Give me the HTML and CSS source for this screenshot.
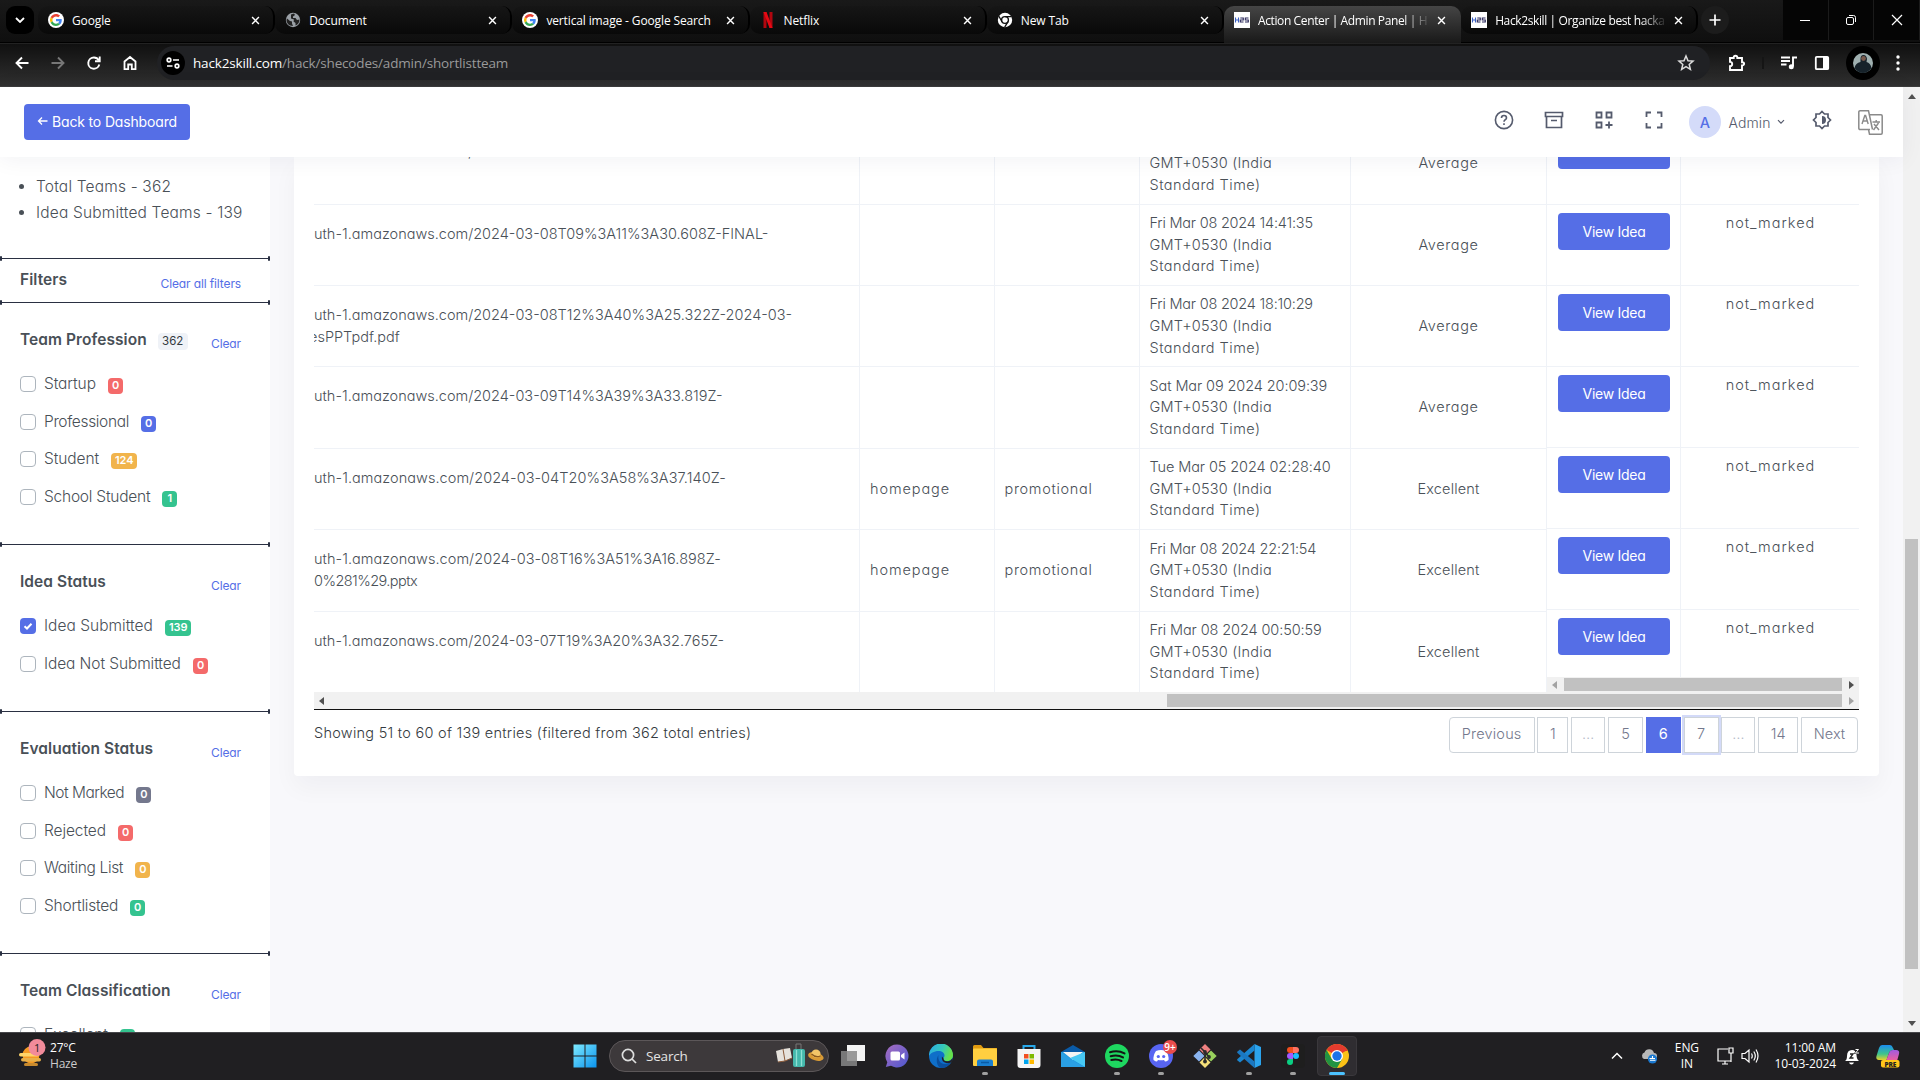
FILE: index.html
```html
<!DOCTYPE html>
<html lang="en">
<head>
<meta charset="utf-8">
<title>Action Center | Admin Panel | Hack2skill</title>
<link rel="stylesheet" href="styles.css">
</head>
<body>
<svg class="defs" width="0" height="0">
  <defs>
    <symbol id="x" viewBox="0 0 10 10"><path d="M1.2 1.2l7.6 7.6M8.8 1.2L1.2 8.8" stroke="#fff" stroke-width="1.6"/></symbol>
    <symbol id="google" viewBox="0 0 48 48"><circle cx="24" cy="24" r="24" fill="#fff"/><g transform="translate(6 6) scale(.75)"><path fill="#EA4335" d="M24 9.5c3.5 0 6.700 1.200 9.200 3.600l6.900-6.900C35.900 2.400 30.500 0 24 0 14.600 0 6.500 5.400 2.600 13.200l8 6.200C12.400 13.700 17.700 9.500 24 9.500z"/><path fill="#4285F4" d="M47 24.500c0-1.600-.2-3.100-.4-4.500H24v9h12.900c-.6 3-2.300 5.500-4.800 7.200l7.700 6C44.400 38 47 31.800 47 24.500z"/><path fill="#FBBC05" d="M10.500 28.600a14.500 14.500 0 010-9.200l-8-6.200a24 24 0 000 21.600z"/><path fill="#34A853" d="M24 48c6.500 0 11.900-2.100 15.900-5.800l-7.700-6c-2.200 1.500-4.900 2.300-8.200 2.300-6.300 0-11.600-4.200-13.500-9.900l-8 6.200C6.500 42.600 14.600 48 24 48z"/></g></symbol>
    <symbol id="h2s" viewBox="0 0 16 16"><rect width="16" height="16" fill="#fff"/><path d="M1.500 5.500v5M4.500 5.500v5M1.500 8h3" stroke="#3d62c4" stroke-width="1.100"/><path d="M6.300 6h3v2h-3v2h3.200M14.500 6h-3.200v2h3v2h-3.300" stroke="#2c2a5c" stroke-width="1.100" fill="none"/></symbol>
    <symbol id="tick" viewBox="0 0 16 16"><path d="M4.500 8.200l2.500 2.300 4.500-4.700" fill="none" stroke="#fff" stroke-width="2"/></symbol>
  </defs>
</svg>

<div class="tabstrip">
  <div class="tab-menu"><svg width="10" height="6" viewBox="0 0 10 6"><path d="M1 1l4 4 4-4" fill="none" stroke="#fff" stroke-width="1.800"/></svg></div>
  <div class="tab"><svg class="fav"><use href="#google"/></svg><span class="tab-title">Google</span><svg class="close"><use href="#x"/></svg></div>
  <div class="tab"><svg class="fav" viewBox="0 0 16 16"><circle cx="8" cy="8" r="7.200" fill="#9aa0a6"/><path d="M2 6.500l3 2.500 2 .500v2l1 2.500c-4 0-6.500-3-6.500-6zM6 2.500l3-1 1 1.500-2 1.500v1.500h2.500l1.500 2 2.500-.5c0 3-2 5.500-4 6v-2.500l-2-1.500.5-2-3-1z" fill="#222"/></svg><span class="tab-title">Document</span><svg class="close"><use href="#x"/></svg></div>
  <div class="tab"><svg class="fav"><use href="#google"/></svg><span class="tab-title">vertical image - Google Search</span><svg class="close"><use href="#x"/></svg></div>
  <div class="tab"><svg class="fav" viewBox="0 0 16 16"><path d="M3.500 0h3v16h-3zM9.500 0h3v16h-3z" fill="#b1060f"/><path d="M3.500 0h3l6 16h-3z" fill="#e50914"/></svg><span class="tab-title">Netflix</span><svg class="close"><use href="#x"/></svg></div>
  <div class="tab"><svg class="fav" viewBox="0 0 16 16"><circle cx="8" cy="8" r="7.200" fill="#fff"/><circle cx="8" cy="8" r="3.400" fill="#fff" stroke="#111" stroke-width="1.400"/><path d="M8 4.600h6.500M5 9.700L1.900 4.200M11 9.700l-3.300 5.500" stroke="#111" stroke-width="1.300"/></svg><span class="tab-title">New Tab</span><svg class="close"><use href="#x"/></svg></div>
  <div class="tab active"><svg class="fav"><use href="#h2s"/></svg><span class="tab-title fade">Action Center | Admin Panel | H</span><svg class="close"><use href="#x"/></svg></div>
  <div class="tab last"><svg class="fav"><use href="#h2s"/></svg><span class="tab-title fade">Hack2skill | Organize best hacka</span><svg class="close"><use href="#x"/></svg></div>
  <div class="new-tab"><svg width="12" height="12" viewBox="0 0 12 12"><path d="M6 .5v11M.5 6h11" stroke="#fff" stroke-width="1.700"/></svg></div>
  <div class="win-controls">
    <div><svg width="12" height="12"><path d="M1 6.500h10" stroke="#fff"/></svg></div>
    <div><svg width="12" height="12" fill="none" stroke="#fff"><rect x="1.500" y="3.500" width="7" height="7" rx="1.500"/><path d="M4 1.500h4.500a2 2 0 012 2V8"/></svg></div>
    <div><svg width="12" height="12"><path d="M1 1l10 10M11 1L1 11" stroke="#fff" stroke-width="1.200"/></svg></div>
  </div>
</div>

<div class="toolbar">
  <div class="nav">
    <svg width="16" height="16" viewBox="0 0 16 16" fill="none" stroke="#fff" stroke-width="1.900"><path d="M14.500 8H2.500M8 2.500L2.500 8 8 13.500"/></svg>
    <svg width="16" height="16" viewBox="0 0 16 16" fill="none" stroke="#777" stroke-width="1.900"><path d="M1.500 8h12M8 2.500L13.500 8 8 13.500"/></svg>
    <svg width="16" height="16" viewBox="0 0 16 16" fill="none" stroke="#fff" stroke-width="1.900"><path d="M13.300 9.500A5.600 5.600 0 118 2.500c2.200 0 3.800 1 5 3"/><path d="M13.700 1.500v4.700H9" /></svg>
    <svg width="16" height="16" viewBox="0 0 16 16" fill="none" stroke="#fff" stroke-width="1.800"><path d="M2.500 6.500L8 2l5.500 4.500v7.600h-3.700V9.500H6.200v4.600H2.500z"/></svg>
  </div>
  <div class="omnibox">
    <div class="site"><svg width="14" height="12" viewBox="0 0 14 12" fill="none" stroke="#fff" stroke-width="1.700"><circle cx="3" cy="3" r="1.800"/><path d="M7 3h6M1 9h5.500"/><circle cx="11" cy="9" r="1.800"/></svg></div>
    <span class="url"><b>hack2skill.com</b>/hack/shecodes/admin/shortlistteam</span>
    <svg class="star" width="18" height="18" viewBox="0 0 18 18"><path d="M9 2l2 4.700 5 .4-3.800 3.300 1.200 5L9 12.700l-4.400 2.700 1.200-5L2 7.100l5-.4z" fill="none" stroke="#ddd" stroke-width="1.500"/></svg>
  </div>
  <div class="tools">
    <svg width="20" height="20" viewBox="0 0 20 20" fill="none" stroke="#fff" stroke-width="1.900"><path d="M4 5h3.700V4.500a1.800 1.800 0 013.600 0V5H16v4.200h.5a1.600 1.600 0 010 3.200H16V17H4v-3.700a2.200 2.200 0 000-4.400z"/></svg>
    <i class="tool-sep"></i>
    <svg width="18" height="16" viewBox="0 0 18 16"><path d="M1 2.500h9M1 6h9M1 9.500h5.500M13 11.500V2.500h4" stroke="#fff" stroke-width="1.900" fill="none"/><circle cx="11.300" cy="11.800" r="2.500" fill="#fff"/></svg>
    <svg width="16" height="16" viewBox="0 0 16 16"><rect x="1.800" y="1.800" width="12.400" height="12.400" rx="1" fill="none" stroke="#fff" stroke-width="1.800"/><path d="M9 2h5v12H9z" fill="#fff"/></svg>
    <svg width="34" height="34" viewBox="0 0 34 34"><circle cx="17" cy="17" r="17" fill="#000"/><circle cx="17" cy="17" r="10" fill="#9fb0b0"/><path d="M8.500 22q1-5 6-6v-3q0-4 3-4t3.500 4l-.5 3q4 1 5 6-3.500 5-8.500 5t-8.500-5z" fill="#16222a"/><circle cx="17.500" cy="12.500" r="2.400" fill="#7a5a4c"/></svg>
    <svg width="4" height="16" viewBox="0 0 4 16" fill="#fff"><circle cx="2" cy="2" r="1.700"/><circle cx="2" cy="8" r="1.700"/><circle cx="2" cy="14" r="1.700"/></svg>
  </div>
</div>

<div class="page">
  <div class="app">
    <header class="topbar">
      <a class="btn back"><svg width="11" height="10" viewBox="0 0 11 10"><path d="M10.500 5H1.500M5 1.500L1.500 5 5 8.500" fill="none" stroke="#fff" stroke-width="1.300"/></svg><span>Back to Dashboard</span></a>
      <div class="top-icons">
        <svg width="20" height="20" viewBox="0 0 20 20" fill="none" stroke="#555b6d" stroke-width="1.600"><circle cx="10" cy="10" r="8.600"/><path d="M7.500 8a2.500 2.500 0 115 0c0 1.700-2.500 1.800-2.500 3.800M10 13.300v1.700"/></svg>
        <svg width="20" height="20" viewBox="0 0 20 20" fill="none" stroke="#555b6d" stroke-width="1.700"><path d="M1.500 2.500h17v4h-17zM2.500 6.500v11h15v-11M7 10.500h6"/></svg>
        <svg width="20" height="20" viewBox="0 0 20 20" fill="none" stroke="#555b6d" stroke-width="1.800"><path d="M2.500 2.500h5v5h-5zM12.500 2.500h5v5h-5zM2.500 12.500h5v5h-5zM15 11.500v7M11.500 15h7"/></svg>
        <svg width="20" height="20" viewBox="0 0 20 20" fill="none" stroke="#555b6d" stroke-width="1.800"><path d="M2.500 7V2.500H7M13 2.500h4.500V7M17.500 13v4.500H13M7 17.500H2.500V13"/></svg>
      </div>
      <div class="user"><span class="avatar">A</span><span class="user-name">Admin</span><svg width="8" height="6" viewBox="0 0 8 6"><path d="M1 1.200l3 3 3-3" fill="none" stroke="#555b6d" stroke-width="1.200"/></svg></div>
      <svg class="theme" width="20" height="20" viewBox="0 0 20 20"><path d="M10 1.500l2.500 2.500H16v3.500l2.500 2.500-2.500 2.500V16h-3.500L10 18.500 7.500 16H4v-3.500L1.500 10 4 7.500V4h3.500z" fill="none" stroke="#555b6d" stroke-width="1.700"/><path d="M10 6a4 4 0 010 8z" fill="#555b6d"/></svg>
      <svg class="lang" width="25" height="25" viewBox="0 0 25 25" fill="none" stroke="#8a8a8a" stroke-width="1.500"><path d="M12 19.500H2A1.200 1.200 0 01.8 18.300V2A1.200 1.200 0 012 .8h8.500l4 18.700M11.500 4.800H23A1.200 1.200 0 0124.200 6v17a1.200 1.200 0 01-1.200 1.200H11.500l-1-4.700"/><path d="M4 14l2.800-8.500h.8L10.200 14M5 11h4.200M14.500 12h7.500M18.200 10v2M15.500 20l5-7M16 14l5 6" stroke-width="1.400"/></svg>
    </header>

    <div class="body">
      <aside class="sidebar">
        <section class="stats"><ul><li>Total Teams - 362</li><li>Idea Submitted Teams - 139</li></ul></section>
        <section class="filters-head"><h3>Filters</h3><a>Clear all filters</a></section>
        <section class="group">
          <div class="head"><h3>Team Profession</h3><em>362</em><a>Clear</a></div>
          <label><i></i><span>Startup</span><b class="red">0</b></label>
          <label><i></i><span class="tight">Professional</span><b class="blue">0</b></label>
          <label><i></i><span>Student</span><b class="amber">124</b></label>
          <label><i></i><span class="snug">School Student</span><b class="green">1</b></label>
        </section>
        <section class="group">
          <div class="head"><h3>Idea Status</h3><a>Clear</a></div>
          <label><i class="on"><svg width="16" height="16"><use href="#tick"/></svg></i><span class="even">Idea Submitted</span><b class="green">139</b></label>
          <label><i></i><span>Idea Not Submitted</span><b class="red">0</b></label>
        </section>
        <section class="group">
          <div class="head"><h3>Evaluation Status</h3><a>Clear</a></div>
          <label><i></i><span class="tighter">Not Marked</span><b class="gray">0</b></label>
          <label><i></i><span>Rejected</span><b class="red">0</b></label>
          <label><i></i><span class="tight">Waiting List</span><b class="amber">0</b></label>
          <label><i></i><span class="snug">Shortlisted</span><b class="green">0</b></label>
        </section>
        <section class="group">
          <div class="head"><h3>Team Classification</h3><a>Clear</a></div>
          <label><i></i><span>Excellent</span><b class="green">0</b></label>
        </section>
      </aside>

      <main class="main">
        <div class="card">
          <div class="tables">
            <div class="scroll-table">
              <div class="row"><div class="link"><p>uth-1.amazonaws.com/2024-03-07T17%3A09%3A47.214Z-</p></div><div></div><div></div><div class="date"><p>Fri Mar 08 2024 13:02:11</p><p>GMT+0530 (India</p><p class="tz">Standard Time)</p></div><div class="mid avg">Average</div></div>
              <div class="row"><div class="link"><p>uth-1.amazonaws.com/2024-03-08T09%3A11%3A30.608Z-FINAL-</p></div><div></div><div></div><div class="date"><p>Fri Mar 08 2024 14:41:35</p><p>GMT+0530 (India</p><p class="tz">Standard Time)</p></div><div class="mid avg">Average</div></div>
              <div class="row"><div class="link"><p>uth-1.amazonaws.com/2024-03-08T12%3A40%3A25.322Z-2024-03-</p><p class="cut">esPPTpdf.pdf</p></div><div></div><div></div><div class="date"><p>Fri Mar 08 2024 18:10:29</p><p>GMT+0530 (India</p><p class="tz">Standard Time)</p></div><div class="mid avg">Average</div></div>
              <div class="row"><div class="link"><p>uth-1.amazonaws.com/2024-03-09T14%3A39%3A33.819Z-</p></div><div></div><div></div><div class="date"><p class="wide">Sat Mar 09 2024 20:09:39</p><p>GMT+0530 (India</p><p class="tz">Standard Time)</p></div><div class="mid avg">Average</div></div>
              <div class="row"><div class="link"><p class="long">uth-1.amazonaws.com/2024-03-04T20%3A58%3A37.140Z-</p></div><div class="home">homepage</div><div class="promo">promotional</div><div class="date"><p class="wide">Tue Mar 05 2024 02:28:40</p><p>GMT+0530 (India</p><p class="tz">Standard Time)</p></div><div class="mid">Excellent</div></div>
              <div class="row"><div class="link"><p class="long">uth-1.amazonaws.com/2024-03-08T16%3A51%3A16.898Z-</p><p class="file">0%281%29.pptx</p></div><div class="home">homepage</div><div class="promo">promotional</div><div class="date"><p>Fri Mar 08 2024 22:21:54</p><p>GMT+0530 (India</p><p class="tz">Standard Time)</p></div><div class="mid">Excellent</div></div>
              <div class="row"><div class="link"><p>uth-1.amazonaws.com/2024-03-07T19%3A20%3A32.765Z-</p></div><div></div><div></div><div class="date"><p class="wide">Fri Mar 08 2024 00:50:59</p><p>GMT+0530 (India</p><p class="tz">Standard Time)</p></div><div class="mid">Excellent</div></div>
            </div>
            <div class="fixed-table">
              <div class="frow"><div><a class="btn">View Idea</a></div><div>not_marked</div></div>
              <div class="frow"><div><a class="btn">View Idea</a></div><div>not_marked</div></div>
              <div class="frow"><div><a class="btn">View Idea</a></div><div>not_marked</div></div>
              <div class="frow"><div><a class="btn">View Idea</a></div><div>not_marked</div></div>
              <div class="frow"><div><a class="btn">View Idea</a></div><div>not_marked</div></div>
              <div class="frow"><div><a class="btn">View Idea</a></div><div>not_marked</div></div>
              <div class="frow short"><div><a class="btn">View Idea</a></div><div>not_marked</div></div>
              <div class="hbar"><i class="la dim"></i><i class="thumb"></i><i class="ra"></i></div>
            </div>
          </div>
          <div class="hbar wide-bar"><i class="la"></i><i class="thumb"></i><i class="ra dim"></i></div>
          <div class="table-foot">
            <span class="info">Showing 51 to 60 of 139 entries (filtered from 362 total entries)</span>
            <nav class="pages"><a class="w-prev">Previous</a><a class="w-one">1</a><a class="w-dots">…</a><a class="w-num">5</a><a class="w-num current">6</a><a class="w-num focus">7</a><a class="w-dots">…</a><a class="w-two">14</a><a class="w-next">Next</a></nav>
          </div>
        </div>
      </main>
    </div>
  </div>
  <div class="vbar"><i class="ua"></i><i class="vthumb"></i><i class="da"></i></div>
</div>

<footer class="taskbar">
  <div class="weather">
    <svg width="28" height="32" viewBox="0 0 28 32"><circle cx="13" cy="17" r="8.500" fill="#f59a23"/><rect x="1" y="15" width="20" height="3.500" rx="1.700" fill="#ffd56b"/><rect x="3" y="20" width="20" height="3.500" rx="1.700" fill="#e8b04a"/><rect x="6" y="25" width="14" height="3" rx="1.500" fill="#c98b2e"/><circle cx="19" cy="9.500" r="8.500" fill="#f28b9a"/><text x="19" y="13.500" class="wnum">1</text></svg>
    <div>27°C<br><span>Haze</span></div>
  </div>
  <div class="dock">
    <svg class="start" width="24" height="24" viewBox="0 0 24 24"><defs><linearGradient id="w" x1="0" y1="0" x2="1" y2="1"><stop offset="0" stop-color="#7eeaff"/><stop offset="1" stop-color="#0a93ee"/></linearGradient></defs><path fill="url(#w)" d="M.5.5h11v11H.5zM12.500.5h11v11h-11zM.5 12.500h11v11H.5zM12.500 12.500h11v11h-11z"/></svg>
    <div class="search">
      <svg width="16" height="16" viewBox="0 0 16 16" fill="none" stroke="#ddd" stroke-width="1.700"><circle cx="7" cy="7" r="5.600"/><path d="M11 11l4 4"/></svg>
      <span>Search</span>
      <svg width="50" height="26" viewBox="0 0 50 26"><path d="M1 8l7-2 7-1 2 10-7 3-7 1z" fill="#e6e2dc"/><path d="M8 6l2 12M3 19l7-1 7-3" stroke="#8a5a3a" fill="none"/><path d="M21 6V1h5v5" fill="none" stroke="#777"/><rect x="18" y="6" width="12" height="18" rx="2" fill="#45b8ac"/><path d="M21.500 7v16M26.500 7v16" stroke="#8fe0d5" stroke-width="1.300"/><ellipse cx="41" cy="13.500" rx="8" ry="4" transform="rotate(15 41 13)" fill="#d99b35"/><ellipse cx="41" cy="10.500" rx="4.500" ry="4" fill="#f3c668"/><path d="M36.500 11q4 4 9 2" stroke="#8a5a20" fill="none" stroke-width="1.300"/></svg>
    </div>
    <div class="ico"><svg width="24" height="24" viewBox="0 0 24 24"><rect x="6" y="1" width="18" height="16" fill="#f4f4f4"/><rect x="0" y="7" width="16" height="15" fill="#888" opacity=".85"/></svg></div>
    <div class="ico"><svg width="24" height="24" viewBox="0 0 24 24"><defs><linearGradient id="t" x1="0" y1="0" x2="1" y2="1"><stop offset="0" stop-color="#a86cc0"/><stop offset="1" stop-color="#4c58d0"/></linearGradient></defs><path d="M12 .5a11.500 11.500 0 11-6 21.300L.8 23l1.500-4.800A11.500 11.500 0 0112 .5z" fill="url(#t)"/><rect x="5.500" y="7.500" width="9.500" height="9" rx="1.500" fill="#fff"/><path d="M16 11l3.500-2.500v7L16 13z" fill="#fff"/></svg></div>
    <div class="ico"><svg width="24" height="24" viewBox="0 0 24 24"><defs><linearGradient id="e" x1="0" y1="0" x2="1" y2=".3"><stop offset="0" stop-color="#2aa8e8"/><stop offset=".6" stop-color="#36c8b8"/><stop offset="1" stop-color="#66e04a"/></linearGradient></defs><circle cx="12" cy="12" r="12" fill="#0f6fc9"/><path d="M0 12a12 12 0 0124-1c0 4-3 6-6 6-3 0-3.500-1.500-3.500-2.500 0-.8 1-1.200 1-3 0-2.500-2.500-4.500-6-4.500C5 7 1 9.500 0 12z" fill="url(#e)"/><path d="M9.500 11c-1 5 2 9.500 7 9 2.500-.3 4.500-1.500 5.500-2.500-1.500 4-5 6.500-10 6.500-4.500-1.500-5.500-9-2.500-13z" fill="#0a4f9e"/><path d="M14.500 14.500c0 1.500 1 3 4 2.800 2 0 4-1.300 5-3.300v3l-1.500 1.500c-6 2-10-1.500-9-6z" fill="#222126"/></svg></div>
    <div class="ico run"><svg width="24" height="24" viewBox="0 0 24 24"><path d="M0 2.500A1.500 1.500 0 011.500 1H8l2.500 3H24v3H0z" fill="#e09a10"/><rect y="4.500" width="24" height="17.500" rx="1" fill="#ffcf40"/><path d="M4 22v-4.500A2 2 0 016 15.500h12a2 2 0 012 2V22z" fill="#1a7fd0"/><path d="M8 18.500h8" stroke="#0a5ba5" stroke-width="1.500"/></svg></div>
    <div class="ico"><svg width="24" height="24" viewBox="0 0 24 24"><path d="M6.500 6V2h11v4" fill="none" stroke="#28a8ea" stroke-width="2"/><path d="M.5 5h23v16a3 3 0 01-3 3h-17a3 3 0 01-3-3z" fill="#f5f5f5"/><path fill="#f25022" d="M7 10h4.500v4.500H7z"/><path fill="#7fba00" d="M12.500 10H17v4.500h-4.500z"/><path fill="#00a4ef" d="M7 15.500h4.500V20H7z"/><path fill="#ffb900" d="M12.500 15.500H17V20h-4.500z"/></svg></div>
    <div class="ico"><svg width="24" height="24" viewBox="0 0 24 24"><path d="M0 8L12 1l12 7v2H0z" fill="#0a5ba8"/><path d="M0 8h24v15H0z" fill="#1e96e0"/><path d="M2 8h20l-10 8z" fill="#f4f4f4"/><path d="M24 8v15L9 14z" fill="#47c8f4"/><path d="M0 8l16 11 8 4H0z" fill="#2a9fe4"/></svg></div>
    <div class="ico run"><svg width="24" height="24" viewBox="0 0 24 24"><circle cx="12" cy="12" r="12" fill="#1ed760"/><path d="M5 8.200c5-1.500 10.500-1 14.500 1.200M5.700 12.200c4.300-1.200 8.800-.8 12.300 1.200M6.300 16c3.500-.9 7.300-.6 10.200 1" fill="none" stroke="#141414" stroke-width="2" stroke-linecap="round"/></svg></div>
    <div class="ico run"><svg class="over" width="28" height="28" viewBox="0 0 28 28"><circle cx="12" cy="16" r="12" fill="#5865f2"/><path d="M7 11q5-2 10 0 3 4 2.500 9-2 1.500-3.500 1.500l-1-1.500q-3 .6-6 0l-1 1.500q-1.500 0-3.500-1.500Q4 15 7 11z" fill="#fff"/><circle cx="9.300" cy="16.500" r="1.600" fill="#5865f2"/><circle cx="14.700" cy="16.500" r="1.600" fill="#5865f2"/><circle cx="21" cy="7" r="7" fill="#e84c4c"/><text x="21" y="10.500" class="dnum">9+</text></svg></div>
    <div class="ico"><svg width="24" height="24" viewBox="0 0 24 24"><path d="M12 0l5.500 5.500L12 11 6.500 5.500z" fill="#f08080"/><path d="M6 6.500l5.500 5.500L6 17.500.3 12z" fill="#8ab4f0"/><path d="M18 6.500l5.700 5.500-5.700 5.500-5.500-5.500z" fill="#98d05c"/><path d="M12 13l5.500 5.500L12 24l-5.500-5.500z" fill="#f5e07a"/><path d="M8 4l4 4v10M12 8l4 5" stroke="#2b2b2b" stroke-width="1.600" fill="none"/><circle cx="12" cy="8" r="1.900" fill="#2b2b2b"/><circle cx="16" cy="13" r="1.900" fill="#2b2b2b"/><circle cx="12" cy="17.500" r="1.900" fill="#2b2b2b"/></svg></div>
    <div class="ico run"><svg width="24" height="24" viewBox="0 0 24 24"><path d="M17.500 0L24 3v18l-6.500 3z" fill="#2ba4ee"/><path d="M17.500 0v6.500L3 18.500l-2.800-2.300v-1z" fill="#1b86d0"/><path d="M17.500 24v-6.500L3 5.500.2 7.800v1z" fill="#1a78c2"/></svg></div>
    <div class="ico run"><svg width="24" height="24" viewBox="0 0 24 24"><rect width="24" height="24" rx="4" fill="#1e1e1e"/><path d="M12 3H9a3 3 0 000 6h3z" fill="#f24e1e"/><path d="M12 3h3a3 3 0 010 6h-3z" fill="#ff7262"/><path d="M12 9H9a3 3 0 000 6h3z" fill="#a259ff"/><circle cx="15" cy="12" r="3" fill="#1abcfe"/><path d="M12 15H9a3 3 0 103 3z" fill="#0acf83"/></svg></div>
    <div class="ico run chrome"><svg width="24" height="24" viewBox="0 0 24 24"><circle cx="12" cy="12" r="12" fill="#fbc116"/><path d="M12 12L1.600 6A12 12 0 0122.400 6z" fill="#e33b2e"/><path d="M1.600 6A12 12 0 0012 24l5.200-9L12 12 6.800 15z" fill="#229342"/><path d="M12 6h10.400v1H12z" fill="#e33b2e"/><circle cx="12" cy="12" r="6" fill="#fff"/><circle cx="12" cy="12" r="4.700" fill="#1a73e8"/></svg></div>
  </div>
  <div class="tray">
    <svg class="t-up" width="12" height="8" viewBox="0 0 12 8"><path d="M1 6.500l5-5 5 5" fill="none" stroke="#fff" stroke-width="1.500"/></svg>
    <svg class="t-cloud" width="18" height="16" viewBox="0 0 18 16"><path d="M4 11a3.500 3.500 0 01.5-6.500A5 5 0 0114 5a3 3 0 010 6z" fill="#b8b8b8"/><circle cx="12.500" cy="11" r="4.600" fill="#1a78d0"/><path d="M9.500 10.500h5.500M10 12.300h5.500M12.500 8v2" stroke="#fff" stroke-width="1.100"/></svg>
    <div class="lang-id">ENG<br>IN</div>
    <svg class="t-net" width="18" height="18" viewBox="0 0 18 18" fill="none" stroke="#fff" stroke-width="1.200"><path d="M11 2H1v12h13V8M5 17h6M8 14v3M12 1h4v5h-4zM14 6v9"/></svg>
    <svg class="t-vol" width="18" height="16" viewBox="0 0 18 16" fill="none" stroke="#fff" stroke-width="1.200"><path d="M1 5.500h3L8 2v12l-4-3.500H1zM10.500 5.500q1.500 2.500 0 5M12.800 3.500q3 4.500 0 9M15 1.500q4 6.500 0 13"/></svg>
    <div class="clock">11:00 AM<br>10-03-2024</div>
    <svg class="t-bell" width="16" height="17" viewBox="0 0 16 17"><path d="M1 13q2-1 2-5 0-6 5-6 4 0 4.500 5 .2 4.500 2.500 6zM5 14.500h5q-.7 2-2.500 2t-2.500-2z" fill="#fff"/><path d="M6 6h3l-3 4h3.500M11 1h3l-3 4h3.500" stroke="#222" fill="none" stroke-width="1.300"/><path d="M11.500 1.500h3l-3 3.500h3.500" stroke="#fff" fill="none"/></svg>
    <svg class="t-copilot" width="24" height="24" viewBox="0 0 24 24"><defs><linearGradient id="c1" x1="0" y1="0" x2="0" y2="1"><stop offset="0" stop-color="#1a8cf0"/><stop offset=".6" stop-color="#3fc48c"/><stop offset="1" stop-color="#e8d22a"/></linearGradient><linearGradient id="c2" x1="0" y1="0" x2="0" y2="1"><stop offset="0" stop-color="#a05be0"/><stop offset="1" stop-color="#f0609a"/></linearGradient></defs><path d="M6 1h8q2 0 3 3l1 2q-4 0-5 3l-2.500 7H3q-3.500 0-2.500-4L3 4Q4 1 6 1z" fill="url(#c1)"/><path d="M17 6h3q4 0 3 4l-2 7H10l3-8q1-3 4-3z" fill="url(#c2)"/><rect x="5" y="16" width="18.500" height="7.500" rx="2" fill="#ffc61a"/><text x="14.300" y="22.500" class="pre">PRE</text></svg>
  </div>
</footer>
</body>
</html>
```
FILE: styles.css
```css
* { box-sizing: border-box; }
body { margin: 0; width: 1920px; height: 1080px; overflow: hidden; background: #f8f8fb; font-family: "Inter", "Open Sans", sans-serif; font-size: 14.5px; color: #495057; display: flex; flex-direction: column; }
svg { flex: none; display: block; }
.defs { position: absolute; }
p, ul, h3 { margin: 0; padding: 0; }
i, em { font-style: normal; }

/* browser tabs */
.tabstrip { height: 44px; flex: none; display: flex; align-items: flex-start; padding: 6px 0 0 6px; background: linear-gradient(#191919, #0f0f0f 42px, #000 42px, #000 43px, #222 43px); font-family: "Open Sans", "Noto Sans", sans-serif; font-size: 12px; color: #fff; }
.tab-menu { width: 28px; height: 28px; border-radius: 9px; background: #000; display: grid; place-items: center; margin-right: 4px; }
.tab { width: 237.200px; height: 28px; display: flex; align-items: center; padding: 0 13px 0 10px; background: linear-gradient(#161616, #090909); background-clip: padding-box; border-right: 2px solid #000; border-radius: 10px; }
.tab.active { height: 37px; padding-bottom: 9px; background: linear-gradient(#454545, #191919); border-color: transparent; border-radius: 10px 10px 0 0; }
.fav { width: 16px; height: 16px; }
.tab-title { margin-left: 8px; flex: 1; white-space: nowrap; letter-spacing: -.13px; }
.fade { letter-spacing: -.38px; -webkit-mask-image: linear-gradient(90deg, #000 84%, transparent 100%); mask-image: linear-gradient(90deg, #000 84%, transparent 100%); margin-right: 6px; }
.close { width: 9px; height: 9px; }
.new-tab { width: 28px; height: 28px; border-radius: 50%; background: #1c1c1c; display: grid; place-items: center; margin-left: 3px; }
.win-controls { margin: -6px 0 0 auto; display: flex; }
.win-controls div { width: 45.700px; height: 40px; background: #050505; border-right: 1px solid #1b1b1b; display: grid; place-items: center; }

/* address bar */
.toolbar { height: 43px; flex: none; display: flex; align-items: center; padding-bottom: 4px; background: linear-gradient(#101010, #303030); border-bottom: 1px solid #3b3b3b; }
.nav { display: flex; gap: 20px; padding-left: 14px; width: 157px; }
.omnibox { width: 1553px; height: 34px; border-radius: 17px; background: #202124; display: flex; align-items: center; padding: 0 15px 0 4px; font-family: "Open Sans", "Noto Sans", sans-serif; font-size: 13.500px; color: #9a9a9a; }
.site { width: 24px; height: 24px; border-radius: 50%; background: #000; display: grid; place-items: center; margin-right: 8px; }
.url { flex: 1; letter-spacing: -.17px; }
.url b { font-weight: 400; color: #fff; }
.tools { display: flex; align-items: center; flex: 1; padding: 0 20px 0 16px; justify-content: space-between; }
.tool-sep { width: 2px; height: 12px; background: #151515; }

/* application */
.page { height: 945px; flex: none; display: flex; font-feature-settings: "cv11"; }
.app { width: 1903px; display: flex; flex-direction: column; }
.topbar { height: 70px; flex: none; background: #fff; display: flex; align-items: center; padding: 0 20px 0 24px; position: relative; box-shadow: 0 2px 22px rgba(18, 38, 63, .06); z-index: 1; }
.btn { display: flex; align-items: center; justify-content: center; height: 37px; width: 112px; border-radius: 4px; background: #556ee6; color: #fff; font-weight: 400; font-size: 14px; letter-spacing: -.27px; }
.btn.back { width: 166px; height: 36px; gap: 4px; letter-spacing: -.15px; margin-bottom: 1px; padding-bottom: 1px; }
.top-icons { margin: -4px 0 0 auto; display: flex; gap: 30px; }
.user { display: flex; align-items: center; margin-left: 25px; color: #555b6d; font-size: 14px; }
.avatar { width: 32px; height: 32px; border-radius: 50%; background: #d4dbf9; color: #556ee6; display: grid; place-items: center; font-size: 14.500px; font-weight: 500; }
.user-name { margin: 0 6px 0 7.500px; font-weight: 300; letter-spacing: .1px; }
.theme { margin: -4px 0 0 27.500px; }
.lang { margin-left: 26px; }
.body { height: 875px; overflow: hidden; display: flex; }

.sidebar { width: 270px; background: #fff; font-size: 15.500px; font-weight: 300; }
.sidebar section { position: relative; border-bottom: 1px solid #2a3042; }
.sidebar section::before, .sidebar section::after { content: ""; position: absolute; bottom: -3px; width: 2px; height: 5px; background: #2a3042; border-radius: 1px; }
.sidebar section::before { left: 0; }
.sidebar section::after { right: 0; }
.stats { height: 102px; padding-top: 17px; }
.stats ul { padding-left: 36px; line-height: 26px; letter-spacing: .18px; }
.filters-head { height: 44px; display: flex; justify-content: space-between; padding: 11px 29px 0 20px; }
.sidebar h3 { font-size: 15.500px; line-height: 20px; font-weight: 600; color: #495057; letter-spacing: .06px; }
.sidebar a { font-size: 12px; line-height: 20px; font-weight: 400; color: #556ee6; margin-top: 4px; letter-spacing: -.12px; }
.group { padding: 27px 29px 22px 20px; }
.head { display: flex; height: 42px; }
.head a { margin-left: auto; }
.head em { width: 30px; height: 17px; margin: 3px 0 0 11px; border-radius: 4px; background: #eff2f7; color: #343a40; font-size: 11.500px; font-weight: 400; text-align: center; line-height: 17px; }
.group label { height: 37.500px; display: flex; align-items: flex-start; line-height: 18px; white-space: nowrap; letter-spacing: -.09px; }
.group label i { width: 16px; height: 16px; flex: none; margin: 4px 8px 0 0; border: 1px solid #adb5bd; border-radius: 4px; }
.group label i.on { border: 0; background: #556ee6; }
.group label span { margin-top: 3px; }
.even { letter-spacing: .03px; } .snug { letter-spacing: -.23px; } .tight { letter-spacing: -.34px; } .tighter { letter-spacing: -.5px; }
.group label b { height: 16px; min-width: 15px; margin: 6px 0 0 12px; padding: 0 4px; border-radius: 4px; color: #fff; font-size: 11px; line-height: 15px; font-weight: 600; text-align: center; }
.group:last-child { border: 0; }
.group:last-child::before, .group:last-child::after { display: none; }
b.red { background: #f46a6a; } b.blue { background: #556ee6; } b.amber { background: #f1b44c; } b.green { background: #34c38f; } b.gray { background: #74788d; }

.main { flex: 1; padding: 0 24px; }
.card { height: 619px; background: #fff; border-radius: 0 0 4px 4px; padding: 0 20px; box-shadow: 0 12px 24px rgba(18, 38, 63, .04); display: flex; flex-direction: column; }
.tables { height: 535px; flex: none; display: flex; overflow: hidden; align-items: flex-end; line-height: 21.600px; font-weight: 300; }
.scroll-table { width: 1233px; }
.row { height: 81.400px; display: grid; grid-template-columns: 546px 134.500px 145px 211.500px 196px; border-top: 1px solid #eff2f7; }
.row > div { border-right: 1px solid #eff2f7; padding: 0 0 1px 10px; align-content: center; white-space: nowrap; }
.row > .link { padding: 18px 0 0; overflow: hidden; align-content: start; }
.row > .mid { text-align: center; padding: 0 0 1px; letter-spacing: .16px; }
.row > .avg { letter-spacing: .6px; }
.long { letter-spacing: .05px; }
.home { letter-spacing: .9px; }
.promo { letter-spacing: .68px; }
.date p { letter-spacing: .22px; }
.date p:first-child { letter-spacing: -.22px; }
.date p.wide { letter-spacing: -.1px; }
.date .tz { letter-spacing: .47px; }
.cut { margin-left: -5px; }
.file { letter-spacing: -.57px; }
.fixed-table { width: 312px; }
.frow { height: 81px; display: grid; grid-template-columns: 134px 178px; border-top: 1px solid #eff2f7; }
.frow.short { height: 68px; }
.frow > div { padding: 8px 0 0 11px; border-right: 1px solid #eff2f7; }
.frow > div:last-child { border: 0; padding: 7px 0 0 1px; text-align: center; letter-spacing: 1px; }
.hbar { height: 15px; background: #f1f1f1; display: flex; align-items: center; padding: 0 5px; }
.wide-bar { height: 18px; flex: none; border-bottom: 1px solid #111; width: 1545px; }
.hbar .thumb { height: 13px; width: 278px; background: #c1c1c1; margin: 0 auto 0 7px; }
.wide-bar .thumb { width: 675px; margin: 0 7px 0 auto; }
.la, .ra { border: 4px solid transparent; }
.la { border-right: 5px solid #505050; border-left: 0; }
.ra { border-left: 5px solid #505050; border-right: 0; }
.la.dim { border-right-color: #a3a3a3; } .ra.dim { border-left-color: #a3a3a3; }
.table-foot { display: flex; justify-content: space-between; width: 1544px; padding-top: 7px; }
.info { font-weight: 300; color: #343a40; line-height: 32px; letter-spacing: .26px; }
.pages { display: flex; gap: 2.800px; }
.pages a { height: 36px; padding-bottom: 3px; border: 1px solid #ced4da; display: grid; place-items: center; font-weight: 300; color: #74788d; }
.pages .w-prev { width: 86px; border-radius: 4px 0 0 4px; letter-spacing: .2px; } .w-one { width: 31px; } .w-dots { width: 34px; } .w-num { width: 35px; } .w-two { width: 40px; } .pages .w-next { width: 57px; border-radius: 0 4px 4px 0; }
.pages .w-dots { color: #b4bac8; }
.pages .current { background: #556ee6; border-color: #556ee6; color: #fff; font-weight: 400; }
.pages .focus { box-shadow: 0 0 0 2px #d3daf8; }

.vbar { width: 17px; background: #f1f1f1; display: flex; flex-direction: column; align-items: center; justify-content: space-between; padding: 7px 0 6px; }
.ua, .da { border: 4.500px solid transparent; }
.ua { border-bottom: 5px solid #505050; border-top: 0; }
.da { border-top: 5px solid #505050; border-bottom: 0; }
.vthumb { width: 13px; height: 430px; background: #c1c1c1; margin: 387px 0 0; }

/* taskbar */
.taskbar { height: 48px; flex: none; background: #201f22; border-top: 1px solid #46464a; display: flex; align-items: center; padding-bottom: 1px; color: #fff; font: 12px/16px "Open Sans", "Noto Sans", sans-serif; }
.weather { display: flex; align-items: center; width: 573px; padding-left: 18px; gap: 4px; letter-spacing: -.2px; }
.weather svg { margin-top: -5px; }
.weather span { color: #ccc; }
.wnum { font-size: 11px; text-anchor: middle; fill: #222; }
.dock { display: flex; align-items: center; width: 786px; }
.search { width: 220px; height: 32px; border: 1px solid #5c5759; border-radius: 16px; background: #3d393b; margin: 0 2px 0 12px; display: flex; align-items: center; padding: 0 3px 0 11px; font-size: 13.500px; color: #e4e4e4; }
.search span { flex: 1; margin-left: 9px; letter-spacing: -.2px; }
.ico { width: 44px; height: 40px; display: grid; place-items: center; position: relative; }
.over { margin: -4px -4px 0 0; }
.run::after { content: ""; position: absolute; bottom: 1px; left: 19px; width: 6px; height: 3px; border-radius: 2px; background: #a0a0a0; }
.chrome { width: 40px; margin-left: 2px; border: 1px solid #3a383c; border-radius: 4px; background: #2f2d31; }
.chrome::after { left: 11px; bottom: 0; width: 16px; background: #4cc2ff; }
.dnum { font-size: 10px; fill: #fff; text-anchor: middle; font-weight: 600; }
.tray { display: flex; align-items: center; margin-left: auto; padding-right: 20px; text-align: center; letter-spacing: -.1px; }
.t-cloud { margin-left: 17px; } .lang-id { margin: 0 18px 0 17px; } .t-vol { margin-left: 6px; }
.clock { text-align: right; width: 77px; white-space: nowrap; } .t-bell { margin-left: 8px; } .t-copilot { margin-left: 16px; }
.pre { font-size: 6.500px; font-weight: 800; fill: #222; text-anchor: middle; }
```
